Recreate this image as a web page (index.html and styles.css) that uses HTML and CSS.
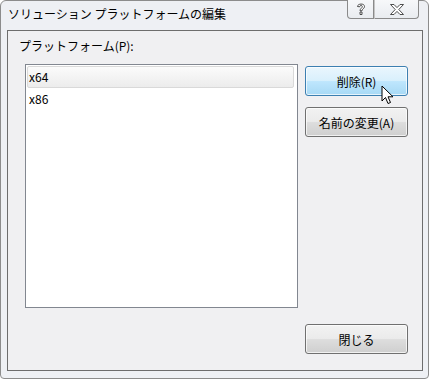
FILE: index.html
```html
<!DOCTYPE html>
<html lang="ja">
<head>
<meta charset="utf-8">
<link rel="stylesheet" href="styles.css">
</head>
<body>
<div class="window">
  <div class="titlebar">
    <div class="title">ソリューション プラットフォームの編集</div>
    <div class="caption-btns">
      <div class="cbtn help">
        <svg width="12" height="14" viewBox="0 0 12 14"><path d="M2.5 4.5 C2.5 1.5 9.5 1 9.5 4.5 C9.5 6.5 7 7 7 8.8 L5 8.8 C5 6.5 7.3 6 7.3 4.6 C7.3 3 4.7 3 4.7 4.8 Z M5 10 H7 V12.5 H5 Z" fill="#fff" stroke="#3a3a3a" stroke-width="0.9" stroke-linejoin="round"/></svg>
      </div>
      <div class="cbtn close">
        <svg width="16" height="13" viewBox="0 0 16 13"><path d="M1.5 1.5 H5 L8 4.6 L11 1.5 H14.5 L9.8 6.5 L14.5 11.5 H11 L8 8.4 L5 11.5 H1.5 L6.2 6.5 Z" fill="#fff" stroke="#3a3a3a" stroke-width="0.9" stroke-linejoin="round"/></svg>
      </div>
    </div>
  </div>
  <div class="client">
    <div class="label">プラットフォーム(P):</div>
    <div class="main">
      <div class="list">
        <div class="item selected">x64</div>
        <div class="item">x86</div>
      </div>
      <div class="side">
        <div class="btn hover">削除(R)</div>
        <div class="btn">名前の変更(A)</div>
      </div>
    </div>
    <div class="footer">
      <div class="btn">閉じる</div>
    </div>
  </div>
  <svg class="cursor" width="14" height="21" viewBox="0 0 14 21"><path d="M1 1 V16 L4.5 12.5 L7 18.5 L9.5 17.5 L7 11.8 H12 Z" fill="#fff" stroke="#000" stroke-width="1" stroke-linejoin="miter"/></svg>
</div>
</body>
</html>
```

FILE: styles.css
```css
html, body {
  margin: 0;
  padding: 0;
  background: #ffffff;
}
body {
  font-family: "Noto Sans CJK JP", "Noto Sans", sans-serif;
  font-size: 12px;
  color: #000;
}
.window {
  position: relative;
  width: 429px;
  height: 379px;
  box-sizing: border-box;
  border: 1px solid #8c8c8c;
  border-radius: 6px 6px 4px 4px;
  background: #eef0f4;
  display: flex;
  flex-direction: column;
}
.titlebar {
  height: 29px;
  display: flex;
  justify-content: space-between;
  align-items: flex-start;
}
.title {
  padding: 4px 0 0 7px;
  font-size: 12px;
  line-height: 18px;
  color: #000;
}
.caption-btns {
  display: flex;
  margin-right: 9px;
  margin-top: -1px;
}
.cbtn {
  height: 19px;
  box-sizing: border-box;
  border: 1px solid #8a8a8a;
  border-top: none;
  background: linear-gradient(#f7f8fa, #e9ecf0);
  display: flex;
  align-items: center;
  justify-content: center;
}
.cbtn.help {
  width: 27px;
  border-radius: 0 0 0 4px;
}
.cbtn.close {
  width: 45px;
  border-left: 1px solid #c4c4c4;
  border-radius: 0 0 4px 0;
}
.client {
  margin: 0 5px 0 6px;
  height: 341px;
  box-sizing: border-box;
  border: 1px solid #6d6d6d;
  background: #f0f0f2;
  padding: 7px 0 0 11px;
}
.label {
  line-height: 16px;
  height: 16px;
}
.main {
  display: flex;
  margin-top: 10px;
  margin-left: 6px;
}
.list {
  width: 273px;
  height: 244px;
  box-sizing: border-box;
  border: 1px solid #828790;
  background: #fff;
  padding: 1px 3px 0 1px;
}
.item {
  height: 22px;
  line-height: 22px;
  padding-left: 2px;
  box-sizing: border-box;
}
.item.selected {
  border: 1px solid #d9d9d9;
  border-radius: 2px;
  background: linear-gradient(#fbfbfb, #ececec);
  padding-left: 1px;
  line-height: 20px;
}
.side {
  display: flex;
  flex-direction: column;
  gap: 11px;
  margin-left: 7px;
  padding-top: 2px;
}
.btn {
  width: 103px;
  height: 30px;
  box-sizing: border-box;
  border: 1px solid #707070;
  border-radius: 3px;
  background: linear-gradient(#f2f2f2 0%, #ebebeb 48%, #dddddd 52%, #cfcfcf 100%);
  box-shadow: inset 0 0 0 1px rgba(255,255,255,0.7);
  display: flex;
  align-items: center;
  justify-content: center;
  font-size: 12px;
}
.btn.hover {
  border-color: #3c7fb1;
  background: linear-gradient(#eaf6fd 0%, #d9f0fc 48%, #bee6fd 52%, #a7d9f5 100%);
}
.footer {
  display: flex;
  justify-content: flex-end;
  margin-top: 16px;
  padding-right: 14px;
}
.cursor {
  position: absolute;
  left: 380px;
  top: 84px;
}
```
